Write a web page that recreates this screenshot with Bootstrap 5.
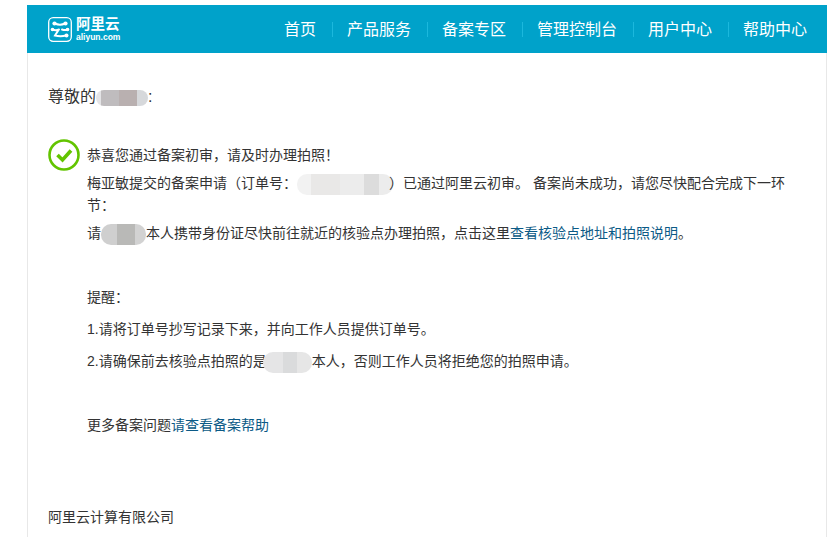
<!DOCTYPE html>
<html lang="zh-CN">
<head>
<meta charset="utf-8">
<title>阿里云</title>
<link href="https://cdn.jsdelivr.net/npm/bootstrap@5.3.0/dist/css/bootstrap.min.css" rel="stylesheet">
<style>
html,body{height:537px;overflow:hidden;background:#fff}
body{font-family:"Liberation Sans","Noto Sans CJK SC",sans-serif;font-size:14px;line-height:22px;color:#333;padding:5px 12px 0 27px}
.mail-shell{width:800px;min-height:532px;border-left:1px solid #e8e8e8;border-right:1px solid #e8e8e8}
.mail-head{height:48px;background:#00a2ca;margin:0 -1px;padding:0 20px 0 21px}
.logo-text{width:44px}
.logo-cn{font-size:14.5px;line-height:14px;color:#fff;font-weight:700;white-space:nowrap}
.logo-en{font-size:8.5px;line-height:10px;color:#fff;font-weight:700;white-space:nowrap;margin-top:1px}
.top-link{color:#fff;text-decoration:none;font-size:16px;line-height:15px;padding:0 16px 0 14px;border-right:1px solid #1cb8dd;height:15px;display:flex;align-items:center}
.top-link:first-child{padding-left:0}
.top-link:last-child{border-right:0;padding-right:0}
.mail-body{padding:33px 20px 0}
.greet{font-size:16px;margin:0 0 36px}
.blur{display:inline-block;vertical-align:middle;border-radius:10px;margin-block:-4px}
.blur-name{width:52px;height:16px;background:linear-gradient(90deg,#e4e4e6 0 10%,#bfbcbe 10% 45%,#b9b0b0 45% 78%,#d6d8db 78%)}
.blur-order{width:96px;height:21px;margin-right:-4px;background:linear-gradient(90deg,#f2f2f2 0 15%,#e9e8e7 15% 45%,#ececec 45% 70%,#dcdcdc 70% 85%,#ececec 85%)}
.blur-who{width:45px;height:21px;background:linear-gradient(90deg,#cfcfcf 0 35%,#b9b9b7 35% 75%,#d2d2d2 75%)}
.blur-who2{width:49px;height:21px;margin-left:-4px;background:linear-gradient(90deg,#e5e5e6 0 40%,#dadbdc 40% 70%,#e6e6e6 70%)}
.ok-row{gap:7px}
.ok-icon{flex:none;margin-top:-5px}
.msg{width:703px}
.msg p{margin:0 0 10px}
.msg .tight{margin-bottom:6px}
.msg .tail{margin-bottom:42px}
.msg a{color:#0b5a86;text-decoration:none}
.sign{margin:0;padding-top:60px}
</style>
</head>
<body>
<div class="mail-shell">
  <header class="mail-head d-flex align-items-center justify-content-between">
    <div class="d-flex align-items-center gap-1">
      <svg width="24" height="25" viewBox="0 0 24 25" aria-hidden="true"><rect x=".7" y=".7" width="22.6" height="23.6" rx="4.5" fill="none" stroke="#fff" stroke-width="1.3"/><g fill="none" stroke="#fff" stroke-linecap="round"><path d="M7 6.5c3 1.400 7 1.400 10 0" stroke-width="2"/><path d="M4.500 12.500c2 .8 4.500.8 6.500 0M14 12.500c2 .8 4 .8 6 0M10.500 13l-3.500 5.500c3.500 .8 7.500 .8 11 0" stroke-width="2"/></g><g fill="#fff"><circle cx="6.500" cy="6.500" r="2.100"/><circle cx="17.500" cy="6.500" r="2.100"/><circle cx="4.500" cy="12.500" r="1.800"/><circle cx="19.500" cy="12.500" r="1.800"/><circle cx="18.500" cy="18.500" r="2"/></g></svg>
      <div class="logo-text d-flex flex-column">
        <span class="logo-cn">阿里云</span>
        <span class="logo-en">aliyun.com</span>
      </div>
    </div>
    <nav class="d-flex align-items-center">
      <a class="top-link" href="#">首页</a>
      <a class="top-link" href="#">产品服务</a>
      <a class="top-link" href="#">备案专区</a>
      <a class="top-link" href="#">管理控制台</a>
      <a class="top-link" href="#">用户中心</a>
      <a class="top-link" href="#">帮助中心</a>
    </nav>
  </header>
  <main class="mail-body">
    <p class="greet">尊敬的<span class="blur blur-name"></span>:</p>
    <div class="d-flex ok-row">
      <svg class="ok-icon" width="32" height="32" viewBox="0 0 32 32" aria-hidden="true"><circle cx="16" cy="16" r="14.500" fill="none" stroke="#62c400" stroke-width="2.600"/><path d="M9.500 16l5 5 8.500-9.500" fill="none" stroke="#62c400" stroke-width="3.600"/></svg>
      <div class="msg">
        <p class="tight">恭喜您通过备案初审，请及时办理拍照！</p>
        <p class="tight">梅亚敏提交的备案申请（订单号：<span class="blur blur-order"></span>）已通过阿里云初审。 备案尚未成功，请您尽快配合完成下一环节：</p>
        <p class="tail">请<span class="blur blur-who"></span>本人携带身份证尽快前往就近的核验点办理拍照，点击这里<a href="#">查看核验点地址和拍照说明</a>。</p>
        <p>提醒：</p>
        <p>1.请将订单号抄写记录下来，并向工作人员提供订单号。</p>
        <p class="tail">2.请确保前去核验点拍照的是<span class="blur blur-who2"></span>本人，否则工作人员将拒绝您的拍照申请。</p>
        <p>更多备案问题<a href="#">请查看备案帮助</a></p>
      </div>
    </div>
    <p class="sign">阿里云计算有限公司</p>
  </main>
</div>
<script src="https://cdn.jsdelivr.net/npm/bootstrap@5.3.0/dist/js/bootstrap.bundle.min.js"></script>
</body>
</html>
